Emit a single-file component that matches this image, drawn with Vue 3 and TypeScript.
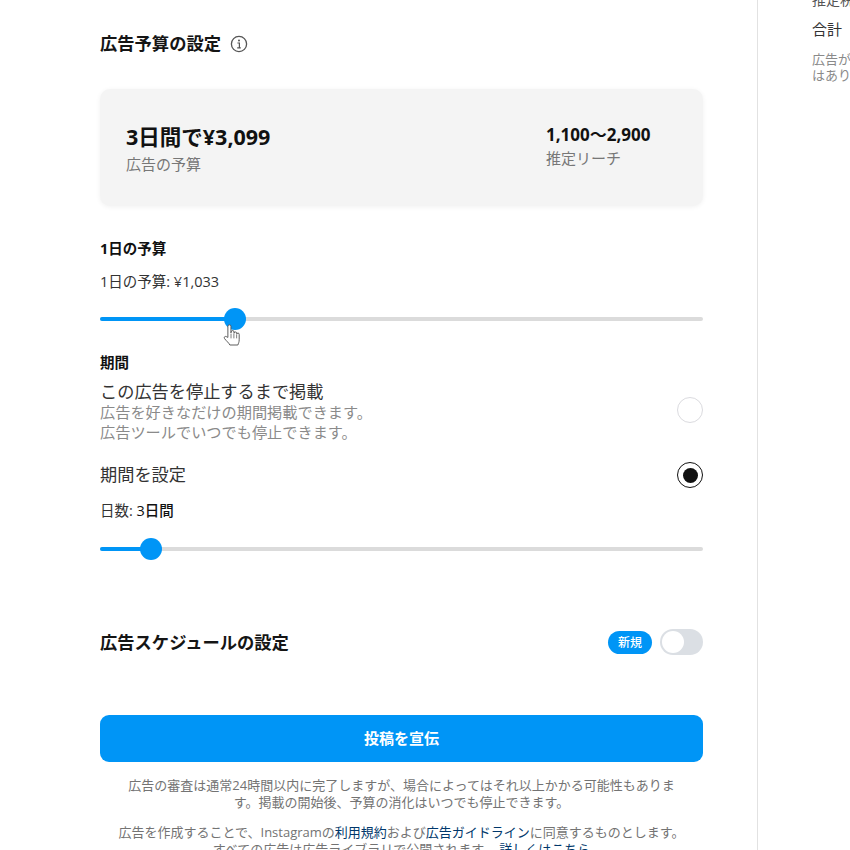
<script setup lang="ts">
const budgetPct = 22.4
const dayPct = 8.5
</script>

<template>
  <div class="page">
    <main class="main">
      <div class="title-row">
        <h2 class="title">広告予算の設定</h2>
        <svg class="info" viewBox="0 0 18 18" width="18" height="18" aria-hidden="true">
          <circle cx="9" cy="9" r="7.6" fill="none" stroke="#555" stroke-width="1.3" />
          <circle cx="9" cy="5.4" r="1" fill="#555" />
          <path d="M7.4 8h2v4.8M7.2 12.9h3.6" fill="none" stroke="#555" stroke-width="1.2" />
        </svg>
      </div>

      <section class="card">
        <div class="card-left">
          <div class="total">3日間で¥3,099</div>
          <div class="card-sub">広告の予算</div>
        </div>
        <div class="card-right">
          <div class="reach">1,100〜2,900</div>
          <div class="card-sub">推定リーチ</div>
        </div>
      </section>

      <h3 class="label daily-label">1日の予算</h3>
      <div class="value daily-value">1日の予算: ¥1,033</div>
      <div class="slider budget-slider">
        <div class="track"></div>
        <div class="fill" :style="{ width: budgetPct + '%' }"></div>
        <div class="thumb" :style="{ left: budgetPct + '%' }"></div>
        <svg class="hand" viewBox="0 0 20 26" width="19" height="25" aria-hidden="true">
          <path d="M6.2 15V3.4a1.6 1.6 0 0 1 3.2 0V10.2l.3-1a1.5 1.5 0 0 1 3 .2v1.2a1.4 1.4 0 0 1 2.8.2v.8a1.3 1.3 0 0 1 2.6.3v5.6c0 2.500-.8 3.600-1.400 5.500H8.300C7 20.500 4.800 19 2.700 16.300c-1-1.300.4-3 1.900-2.100z" fill="#fff" stroke="#555" stroke-width="1" stroke-linejoin="round" />
          <path d="M9.500 11v5M12.500 11v5M15.400 12v4" fill="none" stroke="#555" stroke-width=".8" />
        </svg>
      </div>

      <h3 class="label period-label">期間</h3>
      <div class="option option-stop">
        <div>
          <div class="option-title">この広告を停止するまで掲載</div>
          <div class="option-desc">広告を好きなだけの期間掲載できます。</div>
          <div class="option-desc">広告ツールでいつでも停止できます。</div>
        </div>
        <span class="radio radio-off"></span>
      </div>
      <div class="option option-set">
        <div class="option-title">期間を設定</div>
        <span class="radio radio-on"><span class="dot"></span></span>
      </div>
      <div class="value days-value">日数: <span class="days-strong">3日間</span></div>
      <div class="slider days-slider">
        <div class="track"></div>
        <div class="fill" :style="{ width: dayPct + '%' }"></div>
        <div class="thumb" :style="{ left: dayPct + '%' }"></div>
      </div>

      <div class="schedule">
        <h2 class="title">広告スケジュールの設定</h2>
        <div class="schedule-right">
          <span class="badge">新規</span>
          <span class="toggle"><span class="knob"></span></span>
        </div>
      </div>

      <button class="cta" type="button">投稿を宣伝</button>

      <p class="note note-first">広告の審査は通常24時間以内に完了しますが、場合によってはそれ以上かかる可能性もあります。掲載の開始後、予算の消化はいつでも停止できます。</p>
      <p class="note note-second">広告を作成することで、Instagramの<a class="link">利用規約</a>および<a class="link">広告ガイドライン</a>に同意するものとします。<br />すべての広告は広告ライブラリで公開されます。 <a class="link">詳しくはこちら</a></p>
    </main>

    <aside class="side">
      <div class="side-clip">推定税</div>
      <div class="side-total">合計</div>
      <div class="side-note">広告が<br />はあり</div>
    </aside>
  </div>
</template>

<style>
html, body { margin: 0; background: #fff; }
</style>

<style scoped>
.page {
  display: flex;
  width: 850px;
  height: 850px;
  overflow: hidden;
  background: #fff;
  color: #111;
  font-family: "Open Sans", "Noto Sans CJK JP", sans-serif;
}
.main {
  box-sizing: border-box;
  flex: 0 0 758px;
  height: 850px;
  overflow: hidden;
  padding: 33px 54px 0 100px;
  border-right: 1px solid #e2e2e2;
}
.title-row { display: flex; align-items: center; gap: 9px; height: 21px; }
.title { margin: 0; font-size: 17.3px; font-weight: 700; line-height: 21px; color: #151515; }
.info { flex: none; }
.card {
  display: flex;
  justify-content: space-between;
  box-sizing: border-box;
  height: 117px;
  margin-top: 35px;
  padding: 33px 51px 0 26px;
  background: #f4f4f4;
  border-radius: 10px;
  box-shadow: 0 1px 5px rgba(0, 0, 0, .06);
}
.card-right { width: 106px; padding-top: 1px; white-space: nowrap; }
.total { font-size: 21.5px; font-weight: 700; line-height: 29px; color: #111; }
.reach { font-size: 17px; font-weight: 700; line-height: 23px; color: #111; }
.card-sub { font-size: 15px; line-height: 20px; color: #777; }
.card-left .card-sub { margin-top: 3px; }
.card-right .card-sub { margin-top: 2px; }
.label { margin: 0; font-size: 14.5px; font-weight: 700; line-height: 19px; color: #111; }
.daily-label { margin-top: 33px; }
.value { font-size: 14.5px; line-height: 19px; color: #333; }
.daily-value { margin-top: 14px; }
.slider { position: relative; height: 22px; }
.budget-slider { margin-top: 17px; }
.track, .fill {
  position: absolute;
  left: 0;
  top: 9px;
  height: 4px;
  border-radius: 2px;
}
.track { right: 0; background: #dbdbdb; }
.fill { background: #0095f6; }
.thumb {
  position: absolute;
  top: 0;
  width: 22px;
  height: 22px;
  margin-left: -11px;
  border-radius: 50%;
  background: #0095f6;
}
.hand { position: absolute; left: 122px; top: 15px; }
.period-label { margin-top: 23px; }
.option { display: flex; align-items: center; justify-content: space-between; }
.option-stop { margin-top: 10px; }
.option-title { font-size: 17.2px; line-height: 20px; color: #333; }
.option-desc { font-size: 15.2px; line-height: 20px; color: #8a8a8a; }
.radio {
  box-sizing: border-box;
  display: flex;
  align-items: center;
  justify-content: center;
  flex: none;
  width: 26px;
  height: 26px;
  border: 1.5px solid #dbdbdf;
  border-radius: 50%;
}
.radio-off { margin-bottom: 4px; }
.radio-on { border-color: #111; }
.dot { width: 15px; height: 15px; border-radius: 50%; background: #111; }
.option-set { margin-top: 20px; height: 26px; }
.days-value { margin-top: 13px; }
.days-strong { font-weight: 500; color: #111; }
.days-slider { margin-top: 18px; }
.schedule {
  display: flex;
  align-items: center;
  justify-content: space-between;
  margin-top: 69px;
  height: 26px;
}
.schedule-right { display: flex; align-items: center; gap: 8px; }
.badge {
  width: 44px;
  height: 23px;
  border-radius: 12px;
  background: #0095f6;
  color: #fff;
  font-size: 12px;
  font-weight: 500;
  line-height: 23px;
  text-align: center;
}
.toggle {
  display: block;
  box-sizing: border-box;
  width: 43px;
  height: 26px;
  padding: 2px;
  border-radius: 13px;
  background: #dbdfe4;
}
.knob {
  display: block;
  width: 22px;
  height: 22px;
  border-radius: 50%;
  background: #fff;
}
.cta {
  display: block;
  width: 100%;
  height: 47px;
  margin-top: 60px;
  padding: 0 0 3px;
  border: 0;
  border-radius: 9px;
  background: #0095f6;
  color: #fff;
  font-family: inherit;
  font-size: 15px;
  font-weight: 700;
}
.note { margin: 0; font-size: 13px; line-height: 17px; color: #737373; text-align: center; }
.note-first { margin-top: 15px; padding: 0 24px; }
.note-second { margin-top: 13px; }
.link { color: #00376b; }
.side { flex: 1; min-width: 0; padding-left: 54px; margin-top: -10px; white-space: nowrap; overflow: hidden; }
.side-clip { font-size: 14px; line-height: 20px; color: #555; }
.side-total { margin-top: 9px; font-size: 15px; line-height: 20px; color: #333; }
.side-note { margin-top: 12px; font-size: 13px; line-height: 16px; color: #8a8a8a; }
</style>
